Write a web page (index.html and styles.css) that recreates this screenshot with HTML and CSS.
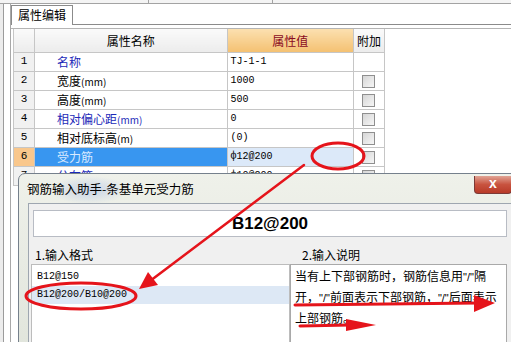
FILE: index.html
```html
<!DOCTYPE html>
<html lang="zh-CN">
<head>
    <meta charset="UTF-8">
    <title>属性编辑</title>
    <link rel="stylesheet" href="styles.css">
</head>
<body>
    <div class="toolbar">
        <span class="tb-cell tb-first"></span>
        <span class="tb-cell tb-second"></span>
    </div>

    <div class="workspace">
        <div class="gutter"></div>
        <div class="panel">
            <div class="tabs">
                <div class="tab">属性编辑</div>
            </div>

            <div class="sheet">
                <table class="grid">
                    <colgroup>
                        <col class="c-num">
                        <col class="c-name">
                        <col class="c-val">
                        <col class="c-extra">
                    </colgroup>
                    <thead>
                        <tr>
                            <th></th>
                            <th>属性名称</th>
                            <th class="val-head">属性值</th>
                            <th>附加</th>
                        </tr>
                    </thead>
                    <tbody>
                        <tr>
                            <td class="num">1</td>
                            <td class="name link">名称</td>
                            <td class="val">TJ-1-1</td>
                            <td class="extra"></td>
                        </tr>
                        <tr>
                            <td class="num">2</td>
                            <td class="name">宽度<small>(mm)</small></td>
                            <td class="val">1000</td>
                            <td class="extra"><span class="chk"></span></td>
                        </tr>
                        <tr>
                            <td class="num">3</td>
                            <td class="name">高度<small>(mm)</small></td>
                            <td class="val">500</td>
                            <td class="extra"><span class="chk"></span></td>
                        </tr>
                        <tr>
                            <td class="num">4</td>
                            <td class="name link">相对偏心距<small>(mm)</small></td>
                            <td class="val">0</td>
                            <td class="extra"><span class="chk"></span></td>
                        </tr>
                        <tr>
                            <td class="num">5</td>
                            <td class="name">相对底标高<small>(m)</small></td>
                            <td class="val">(0)</td>
                            <td class="extra"><span class="chk"></span></td>
                        </tr>
                        <tr class="current">
                            <td class="num">6</td>
                            <td class="name">受力筋</td>
                            <td class="val">ф12@200</td>
                            <td class="extra"><span class="chk"></span></td>
                        </tr>
                        <tr>
                            <td class="num">7</td>
                            <td class="name link">分布筋</td>
                            <td class="val">ф10@200</td>
                            <td class="extra"><span class="chk"></span></td>
                        </tr>
                    </tbody>
                </table>
            </div>
        </div>
    </div>

    <!-- окно помощника поверх таблицы -->
    <div class="dialog">
        <div class="dlg-title">
            <span>钢筋输入助手-条基单元受力筋</span>
            <div class="close">x</div>
        </div>
        <div class="dlg-body">
            <div class="preview">B12@200</div>
            <div class="columns">
                <div class="col col-left">
                    <div class="label">1.输入格式</div>
                    <div class="list">
                        <div class="item">B12@150</div>
                        <div class="item selected">B12@200/B10@200</div>
                    </div>
                </div>
                <div class="col col-right">
                    <div class="label">2.输入说明</div>
                    <div class="note">当有上下部钢筋时，钢筋信息用<span class="q">"/"</span>隔<br>开，<span class="q">"/"</span>前面表示下部钢筋，<span class="q">"/"</span>后面表示<br>上部钢筋。</div>
                </div>
            </div>
        </div>
    </div>

    <!-- красные пометки -->
    <svg class="marks" width="511" height="342" viewBox="0 0 511 342">
        <g fill="none" stroke="#e5141b" stroke-width="3">
            <ellipse cx="338" cy="156" rx="26" ry="13"/>
            <ellipse cx="81" cy="296" rx="55" ry="13"/>
        </g>
        <g stroke="#e5141b" stroke-width="2.5" stroke-linecap="round">
            <line x1="304" y1="165" x2="150" y2="281"/>
            <line x1="295" y1="305" x2="478" y2="303" stroke-width="3"/>
            <line x1="300" y1="326" x2="350" y2="325" stroke-width="3"/>
        </g>
        <g fill="#e5141b">
            <polygon points="139,289 158,285 148,272"/>
            <polygon points="474,295 495,303 474,312"/>
            <polygon points="346,319 376,325 346,331"/>
        </g>
    </svg>
</body>
</html>
```

FILE: styles.css
```css
/* Базовые настройки окна */
html, body {
    margin: 0;
    padding: 0;
}

body {
    width: 511px;
    height: 342px;
    overflow: hidden;
    position: relative;
    background: #ffffff;
    font-family: "Noto Sans CJK SC", "Liberation Sans", sans-serif;
    font-size: 12px;
    color: #000;
}

/* Остатки панели инструментов сверху */
.toolbar {
    display: flex;
    height: 3px;
    background: #f4f4f4;
    border-bottom: 1px solid #a3a3a3;
}

.tb-cell {
    border-right: 1px solid #a3a3a3;
}

.tb-first {
    width: 148px;
}

.tb-second {
    width: 123px;
}

.workspace {
    display: flex;
    height: 338px;
}

.gutter {
    width: 3px;
    background: #ececec;
    border-right: 1px solid #9b9b9b;
    margin-right: 6px;
}

.panel {
    flex: 1;
    border-left: 1px solid #a8a8a8;
}

/* Вкладка */
.tabs {
    display: flex;
    align-items: flex-end;
    height: 20px;
    border-bottom: 1px solid #8b8b8b;
}

.tab {
    height: 20px;
    margin-bottom: -1px;
    padding: 0 6px;
    line-height: 18px;
    background: #ffffff;
    border: 1px solid #8b8b8b;
    border-bottom: none;
    box-sizing: border-box;
}

.sheet {
    margin-top: 3px;
    border-top: 1px solid #b4b4b4;
    padding-left: 2px;
}

/* Таблица свойств */
.grid {
    border-collapse: collapse;
    table-layout: fixed;
    width: 372px;
}

.c-num { width: 21px; }
.c-name { width: 192px; }
.c-val { width: 126px; }
.c-extra { width: 31px; }

.grid th,
.grid td {
    border: 1px solid #c6c6c6;
    padding: 0;
    white-space: nowrap;
    overflow: hidden;
}

.grid thead tr {
    height: 23px;
}

.grid th {
    border-top: none;
    font-weight: normal;
    background: linear-gradient(#fafafa, #ececec);
    text-align: center;
}

.grid th.val-head {
    color: #8a0a1e;
    background: linear-gradient(#fbe0b0, #f4c172);
}

.grid tbody tr {
    height: 19px;
}

.grid td {
    line-height: 17px;
}

.num {
    text-align: center;
    background: #f1f1f1;
    font-family: "Liberation Mono", monospace;
    font-size: 11px;
}

.name {
    padding-left: 22px !important;
}

.name small {
    font-size: 10px;
}

.link {
    color: #1c29b8;
}

.val {
    padding-left: 3px !important;
    font-family: "Liberation Mono", monospace;
    font-size: 10px;
}

.extra {
    text-align: center;
}

.chk {
    display: inline-block;
    width: 11px;
    height: 11px;
    margin-top: 3px;
    vertical-align: top;
    border: 1px solid #8f8f8f;
    background: linear-gradient(135deg, #d6d6d6, #f6f6f6);
}

.current .num {
    background: #f9c78c;
}

.current .name {
    background: #3896f0;
    color: #d9eaff;
}

.current .val {
    background: #dce9f9;
}

/* Диалог помощника */
.dialog {
    position: absolute;
    left: 18px;
    top: 173px;
    width: 500px;
    height: 175px;
    border: 1px solid #75808c;
    border-radius: 7px 7px 0 0;
    background: radial-gradient(ellipse 40px 14px at 70px 16px, rgba(150, 175, 230, 0.45), transparent),
                linear-gradient(#eff1ea, #e1e5dc);
}

.dlg-title {
    display: flex;
    align-items: flex-start;
    height: 29px;
    padding-left: 8px;
}

.dlg-title span {
    margin-top: 7px;
    font-size: 12.5px;
    line-height: 16px;
}

.close {
    margin-left: auto;
    margin-right: 7px;
    margin-top: 2px;
    width: 38px;
    height: 18px;
    line-height: 15px;
    text-align: center;
    color: #ffffff;
    font-family: "Liberation Sans", sans-serif;
    font-weight: bold;
    font-size: 14px;
    border: 1px solid #7c3a36;
    border-top: none;
    border-radius: 0 0 4px 4px;
    background: linear-gradient(#e1a394, #c8533f 50%, #b83a28);
    box-sizing: border-box;
}

.dlg-body {
    margin-left: 9px;
    height: 140px;
    background: #f0f0f0;
    border: 1px solid #9ea6b0;
    padding: 6px 0 0 4px;
}

.preview {
    width: 474px;
    height: 27px;
    box-sizing: border-box;
    border: 1px solid #b8bcc4;
    background: #ffffff;
    text-align: center;
    line-height: 25px;
    font-family: "Liberation Sans", sans-serif;
    font-weight: bold;
    font-size: 17px;
}

.columns {
    display: flex;
    margin-top: 9px;
    margin-left: -2px;
}

.label {
    height: 18px;
    line-height: 18px;
    padding-left: 4px;
}

.col-left {
    width: 259px;
}

.col-right {
    width: 217px;
}

.col-right .label {
    padding-left: 12px;
}

.list {
    height: 90px;
    background: #ffffff;
    border: 1px solid #bcbcbc;
    padding-top: 3px;
    font-family: "Liberation Mono", monospace;
    font-size: 10px;
}

.item {
    height: 18px;
    line-height: 18px;
    padding-left: 5px;
}

.item.selected {
    background: #dde8f5;
}

.note {
    height: 90px;
    background: #ffffff;
    border: 1px solid #a9a9a9;
    padding: 1px 4px;
    line-height: 19px;
    white-space: nowrap;
}

.note .q {
    font-family: "Liberation Sans", sans-serif;
    font-size: 11px;
}

/* Слой с пометками */
.marks {
    position: absolute;
    left: 0;
    top: 0;
    pointer-events: none;
}
```
